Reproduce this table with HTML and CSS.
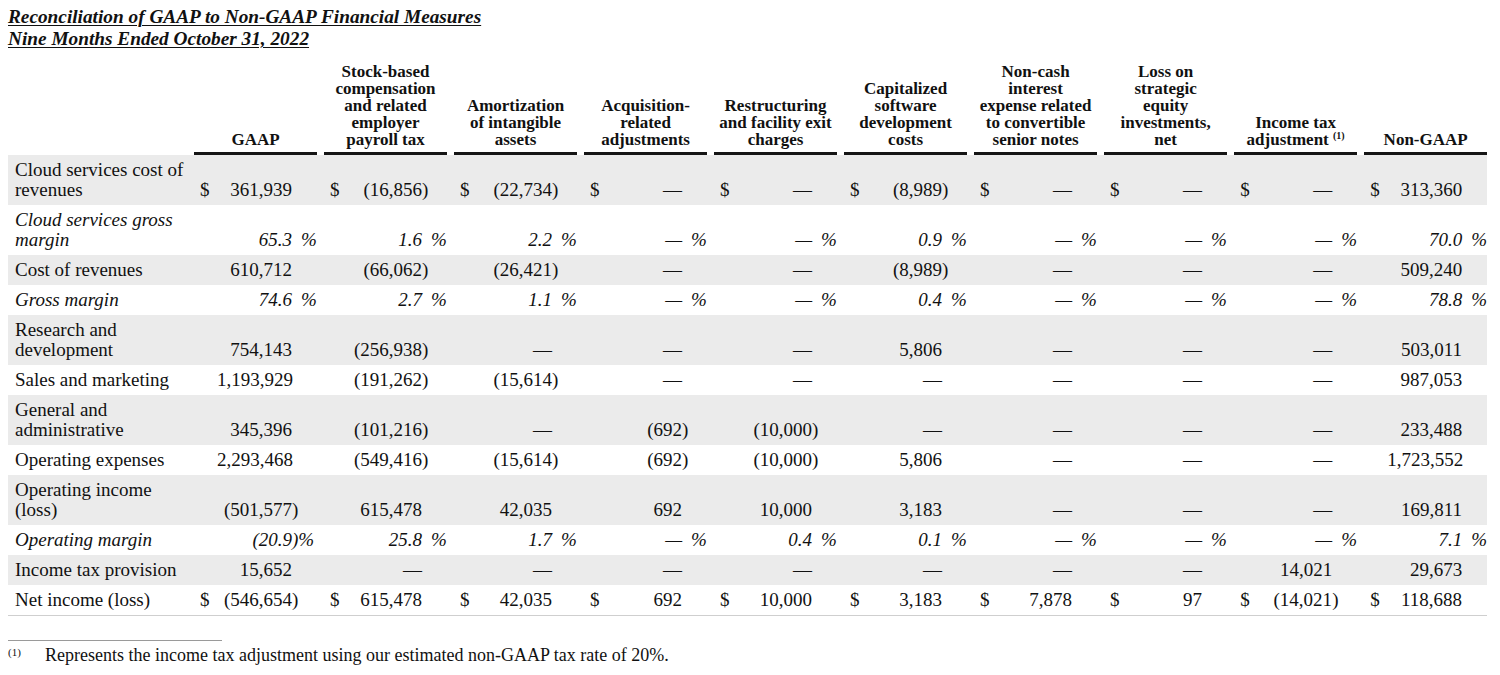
FILE: index.html
```html
<!DOCTYPE html>
<html>
<head>
<meta charset="utf-8">
<link rel="stylesheet" href="styles.css">
</head>
<body>
<div class="page">
  <h1 class="title">Reconciliation of GAAP to Non-GAAP Financial Measures<br>Nine Months Ended October 31, 2022</h1>
  <table class="recon">
    <colgroup>
      <col class="c-label">
      <col class="c-cur"><col class="c-num"><col class="c-sfx">
      <col class="c-cur"><col class="c-num"><col class="c-sfx">
      <col class="c-cur"><col class="c-num"><col class="c-sfx">
      <col class="c-cur"><col class="c-num"><col class="c-sfx">
      <col class="c-cur"><col class="c-num"><col class="c-sfx">
      <col class="c-cur"><col class="c-num"><col class="c-sfx">
      <col class="c-cur"><col class="c-num"><col class="c-sfx">
      <col class="c-cur"><col class="c-num"><col class="c-sfx">
      <col class="c-cur"><col class="c-num"><col class="c-sfx">
      <col class="c-cur"><col class="c-num"><col class="c-sfx">
    </colgroup>
    <thead>
      <tr>
        <th></th>
        <th colspan="3"><div class="hd">GAAP</div></th>
        <th colspan="3"><div class="hd">Stock-based<br>compensation<br>and related<br>employer<br>payroll tax</div></th>
        <th colspan="3"><div class="hd">Amortization<br>of intangible<br>assets</div></th>
        <th colspan="3"><div class="hd">Acquisition-<br>related<br>adjustments</div></th>
        <th colspan="3"><div class="hd">Restructuring<br>and facility exit<br>charges</div></th>
        <th colspan="3"><div class="hd">Capitalized<br>software<br>development<br>costs</div></th>
        <th colspan="3"><div class="hd">Non-cash<br>interest<br>expense related<br>to convertible<br>senior notes</div></th>
        <th colspan="3"><div class="hd">Loss on<br>strategic<br>equity<br>investments,<br>net</div></th>
        <th colspan="3"><div class="hd">Income tax<br>adjustment <sup class="hsup">(1)</sup></div></th>
        <th colspan="3"><div class="hd">Non-GAAP</div></th>
      </tr>
    </thead>
    <tbody>
      <tr class="shade">
        <td class="lbl">Cloud services cost of<br>revenues</td>
        <td class="cur">$</td><td class="num">361,939</td><td class="sfx"></td>
        <td class="cur">$</td><td class="num">(16,856</td><td class="sfx">)</td>
        <td class="cur">$</td><td class="num">(22,734</td><td class="sfx">)</td>
        <td class="cur">$</td><td class="num">—</td><td class="sfx"></td>
        <td class="cur">$</td><td class="num">—</td><td class="sfx"></td>
        <td class="cur">$</td><td class="num">(8,989</td><td class="sfx">)</td>
        <td class="cur">$</td><td class="num">—</td><td class="sfx"></td>
        <td class="cur">$</td><td class="num">—</td><td class="sfx"></td>
        <td class="cur">$</td><td class="num">—</td><td class="sfx"></td>
        <td class="cur">$</td><td class="num">313,360</td><td class="sfx"></td>
      </tr>
      <tr class="pct">
        <td class="lbl">Cloud services gross<br>margin</td>
        <td class="cur"></td><td class="num">65.3</td><td class="sfx">%</td>
        <td class="cur"></td><td class="num">1.6</td><td class="sfx">%</td>
        <td class="cur"></td><td class="num">2.2</td><td class="sfx">%</td>
        <td class="cur"></td><td class="num">—</td><td class="sfx">%</td>
        <td class="cur"></td><td class="num">—</td><td class="sfx">%</td>
        <td class="cur"></td><td class="num">0.9</td><td class="sfx">%</td>
        <td class="cur"></td><td class="num">—</td><td class="sfx">%</td>
        <td class="cur"></td><td class="num">—</td><td class="sfx">%</td>
        <td class="cur"></td><td class="num">—</td><td class="sfx">%</td>
        <td class="cur"></td><td class="num">70.0</td><td class="sfx">%</td>
      </tr>
      <tr class="shade">
        <td class="lbl">Cost of revenues</td>
        <td class="cur"></td><td class="num">610,712</td><td class="sfx"></td>
        <td class="cur"></td><td class="num">(66,062</td><td class="sfx">)</td>
        <td class="cur"></td><td class="num">(26,421</td><td class="sfx">)</td>
        <td class="cur"></td><td class="num">—</td><td class="sfx"></td>
        <td class="cur"></td><td class="num">—</td><td class="sfx"></td>
        <td class="cur"></td><td class="num">(8,989</td><td class="sfx">)</td>
        <td class="cur"></td><td class="num">—</td><td class="sfx"></td>
        <td class="cur"></td><td class="num">—</td><td class="sfx"></td>
        <td class="cur"></td><td class="num">—</td><td class="sfx"></td>
        <td class="cur"></td><td class="num">509,240</td><td class="sfx"></td>
      </tr>
      <tr class="pct">
        <td class="lbl">Gross margin</td>
        <td class="cur"></td><td class="num">74.6</td><td class="sfx">%</td>
        <td class="cur"></td><td class="num">2.7</td><td class="sfx">%</td>
        <td class="cur"></td><td class="num">1.1</td><td class="sfx">%</td>
        <td class="cur"></td><td class="num">—</td><td class="sfx">%</td>
        <td class="cur"></td><td class="num">—</td><td class="sfx">%</td>
        <td class="cur"></td><td class="num">0.4</td><td class="sfx">%</td>
        <td class="cur"></td><td class="num">—</td><td class="sfx">%</td>
        <td class="cur"></td><td class="num">—</td><td class="sfx">%</td>
        <td class="cur"></td><td class="num">—</td><td class="sfx">%</td>
        <td class="cur"></td><td class="num">78.8</td><td class="sfx">%</td>
      </tr>
      <tr class="shade">
        <td class="lbl">Research and<br>development</td>
        <td class="cur"></td><td class="num">754,143</td><td class="sfx"></td>
        <td class="cur"></td><td class="num">(256,938</td><td class="sfx">)</td>
        <td class="cur"></td><td class="num">—</td><td class="sfx"></td>
        <td class="cur"></td><td class="num">—</td><td class="sfx"></td>
        <td class="cur"></td><td class="num">—</td><td class="sfx"></td>
        <td class="cur"></td><td class="num">5,806</td><td class="sfx"></td>
        <td class="cur"></td><td class="num">—</td><td class="sfx"></td>
        <td class="cur"></td><td class="num">—</td><td class="sfx"></td>
        <td class="cur"></td><td class="num">—</td><td class="sfx"></td>
        <td class="cur"></td><td class="num">503,011</td><td class="sfx"></td>
      </tr>
      <tr>
        <td class="lbl">Sales and marketing</td>
        <td class="cur"></td><td class="num">1,193,929</td><td class="sfx"></td>
        <td class="cur"></td><td class="num">(191,262</td><td class="sfx">)</td>
        <td class="cur"></td><td class="num">(15,614</td><td class="sfx">)</td>
        <td class="cur"></td><td class="num">—</td><td class="sfx"></td>
        <td class="cur"></td><td class="num">—</td><td class="sfx"></td>
        <td class="cur"></td><td class="num">—</td><td class="sfx"></td>
        <td class="cur"></td><td class="num">—</td><td class="sfx"></td>
        <td class="cur"></td><td class="num">—</td><td class="sfx"></td>
        <td class="cur"></td><td class="num">—</td><td class="sfx"></td>
        <td class="cur"></td><td class="num">987,053</td><td class="sfx"></td>
      </tr>
      <tr class="shade">
        <td class="lbl">General and<br>administrative</td>
        <td class="cur"></td><td class="num">345,396</td><td class="sfx"></td>
        <td class="cur"></td><td class="num">(101,216</td><td class="sfx">)</td>
        <td class="cur"></td><td class="num">—</td><td class="sfx"></td>
        <td class="cur"></td><td class="num">(692</td><td class="sfx">)</td>
        <td class="cur"></td><td class="num">(10,000</td><td class="sfx">)</td>
        <td class="cur"></td><td class="num">—</td><td class="sfx"></td>
        <td class="cur"></td><td class="num">—</td><td class="sfx"></td>
        <td class="cur"></td><td class="num">—</td><td class="sfx"></td>
        <td class="cur"></td><td class="num">—</td><td class="sfx"></td>
        <td class="cur"></td><td class="num">233,488</td><td class="sfx"></td>
      </tr>
      <tr>
        <td class="lbl">Operating expenses</td>
        <td class="cur"></td><td class="num">2,293,468</td><td class="sfx"></td>
        <td class="cur"></td><td class="num">(549,416</td><td class="sfx">)</td>
        <td class="cur"></td><td class="num">(15,614</td><td class="sfx">)</td>
        <td class="cur"></td><td class="num">(692</td><td class="sfx">)</td>
        <td class="cur"></td><td class="num">(10,000</td><td class="sfx">)</td>
        <td class="cur"></td><td class="num">5,806</td><td class="sfx"></td>
        <td class="cur"></td><td class="num">—</td><td class="sfx"></td>
        <td class="cur"></td><td class="num">—</td><td class="sfx"></td>
        <td class="cur"></td><td class="num">—</td><td class="sfx"></td>
        <td class="cur"></td><td class="num">1,723,552</td><td class="sfx"></td>
      </tr>
      <tr class="shade">
        <td class="lbl">Operating income<br>(loss)</td>
        <td class="cur"></td><td class="num">(501,577</td><td class="sfx">)</td>
        <td class="cur"></td><td class="num">615,478</td><td class="sfx"></td>
        <td class="cur"></td><td class="num">42,035</td><td class="sfx"></td>
        <td class="cur"></td><td class="num">692</td><td class="sfx"></td>
        <td class="cur"></td><td class="num">10,000</td><td class="sfx"></td>
        <td class="cur"></td><td class="num">3,183</td><td class="sfx"></td>
        <td class="cur"></td><td class="num">—</td><td class="sfx"></td>
        <td class="cur"></td><td class="num">—</td><td class="sfx"></td>
        <td class="cur"></td><td class="num">—</td><td class="sfx"></td>
        <td class="cur"></td><td class="num">169,811</td><td class="sfx"></td>
      </tr>
      <tr class="pct">
        <td class="lbl">Operating margin</td>
        <td class="cur"></td><td class="num">(20.9</td><td class="sfx tight">)%</td>
        <td class="cur"></td><td class="num">25.8</td><td class="sfx">%</td>
        <td class="cur"></td><td class="num">1.7</td><td class="sfx">%</td>
        <td class="cur"></td><td class="num">—</td><td class="sfx">%</td>
        <td class="cur"></td><td class="num">0.4</td><td class="sfx">%</td>
        <td class="cur"></td><td class="num">0.1</td><td class="sfx">%</td>
        <td class="cur"></td><td class="num">—</td><td class="sfx">%</td>
        <td class="cur"></td><td class="num">—</td><td class="sfx">%</td>
        <td class="cur"></td><td class="num">—</td><td class="sfx">%</td>
        <td class="cur"></td><td class="num">7.1</td><td class="sfx">%</td>
      </tr>
      <tr class="shade">
        <td class="lbl">Income tax provision</td>
        <td class="cur"></td><td class="num">15,652</td><td class="sfx"></td>
        <td class="cur"></td><td class="num">—</td><td class="sfx"></td>
        <td class="cur"></td><td class="num">—</td><td class="sfx"></td>
        <td class="cur"></td><td class="num">—</td><td class="sfx"></td>
        <td class="cur"></td><td class="num">—</td><td class="sfx"></td>
        <td class="cur"></td><td class="num">—</td><td class="sfx"></td>
        <td class="cur"></td><td class="num">—</td><td class="sfx"></td>
        <td class="cur"></td><td class="num">—</td><td class="sfx"></td>
        <td class="cur"></td><td class="num">14,021</td><td class="sfx"></td>
        <td class="cur"></td><td class="num">29,673</td><td class="sfx"></td>
      </tr>
      <tr class="last">
        <td class="lbl">Net income (loss)</td>
        <td class="cur">$</td><td class="num">(546,654</td><td class="sfx">)</td>
        <td class="cur">$</td><td class="num">615,478</td><td class="sfx"></td>
        <td class="cur">$</td><td class="num">42,035</td><td class="sfx"></td>
        <td class="cur">$</td><td class="num">692</td><td class="sfx"></td>
        <td class="cur">$</td><td class="num">10,000</td><td class="sfx"></td>
        <td class="cur">$</td><td class="num">3,183</td><td class="sfx"></td>
        <td class="cur">$</td><td class="num">7,878</td><td class="sfx"></td>
        <td class="cur">$</td><td class="num">97</td><td class="sfx"></td>
        <td class="cur">$</td><td class="num">(14,021</td><td class="sfx">)</td>
        <td class="cur">$</td><td class="num">118,688</td><td class="sfx"></td>
      </tr>
    </tbody>
  </table>
  <div class="foot">
    <div class="foot-rule"></div>
    <p class="note"><span class="mark">(1)</span><span class="note-text">Represents the income tax adjustment using our estimated non-GAAP tax rate of 20%.</span></p>
  </div>
</div>
</body>
</html>
```

FILE: styles.css
```css
html, body {
  margin: 0;
  padding: 0;
  background: #ffffff;
}

body {
  font-family: "Liberation Serif", "Times New Roman", serif;
  color: #111111;
}

.page {
  padding: 6px 8px 0 8px;
}

.title {
  margin: 0;
  font-size: 19.3px;
  line-height: 22px;
  font-weight: bold;
  font-style: italic;
  text-decoration: underline;
  text-decoration-thickness: 1px;
  text-underline-offset: 2px;
}

.recon {
  margin-top: 13px;
  width: 1479px;
  table-layout: fixed;
  border-collapse: collapse;
  border-spacing: 0;
  font-size: 19px;
  line-height: 20px;
}

.c-label { width: 179px; }
.c-cur { width: 30px; }
.c-num { width: 75px; }
.c-sfx { width: 25px; }

.recon th {
  padding: 0;
  vertical-align: bottom;
  font-weight: bold;
}

.hd {
  margin-left: 7px;
  padding-bottom: 4px;
  border-bottom: 3px solid #151515;
  text-align: center;
  font-size: 17px;
  line-height: 17px;
  white-space: nowrap;
}

.hsup {
  font-size: 10px;
  line-height: 0;
  vertical-align: 6px;
}

.recon td {
  padding: 5px 0;
  vertical-align: bottom;
  white-space: nowrap;
}

.recon tr.shade td {
  background: #ebebeb;
}

.recon tr.last td {
  border-bottom: 1px solid #cfcfcf;
}

.lbl {
  padding-left: 7px !important;
  text-align: left;
}

.cur {
  padding-left: 13px !important;
  text-align: left;
}

.num {
  text-align: right;
}

.sfx {
  text-align: left;
}

.pct td {
  font-style: italic;
}

.pct .sfx {
  padding-left: 9px !important;
}

.pct .sfx.tight {
  padding-left: 0 !important;
}

.foot {
  margin-top: 24px;
}

.foot-rule {
  width: 214px;
  height: 1px;
  background: #9a9a9a;
}

.note {
  margin: 0;
  padding-top: 4px;
  display: flex;
  align-items: flex-start;
  font-size: 18px;
  line-height: 20px;
}

.mark {
  width: 37px;
  flex: none;
  font-size: 11px;
  line-height: 12px;
  padding-top: 1px;
}
```
